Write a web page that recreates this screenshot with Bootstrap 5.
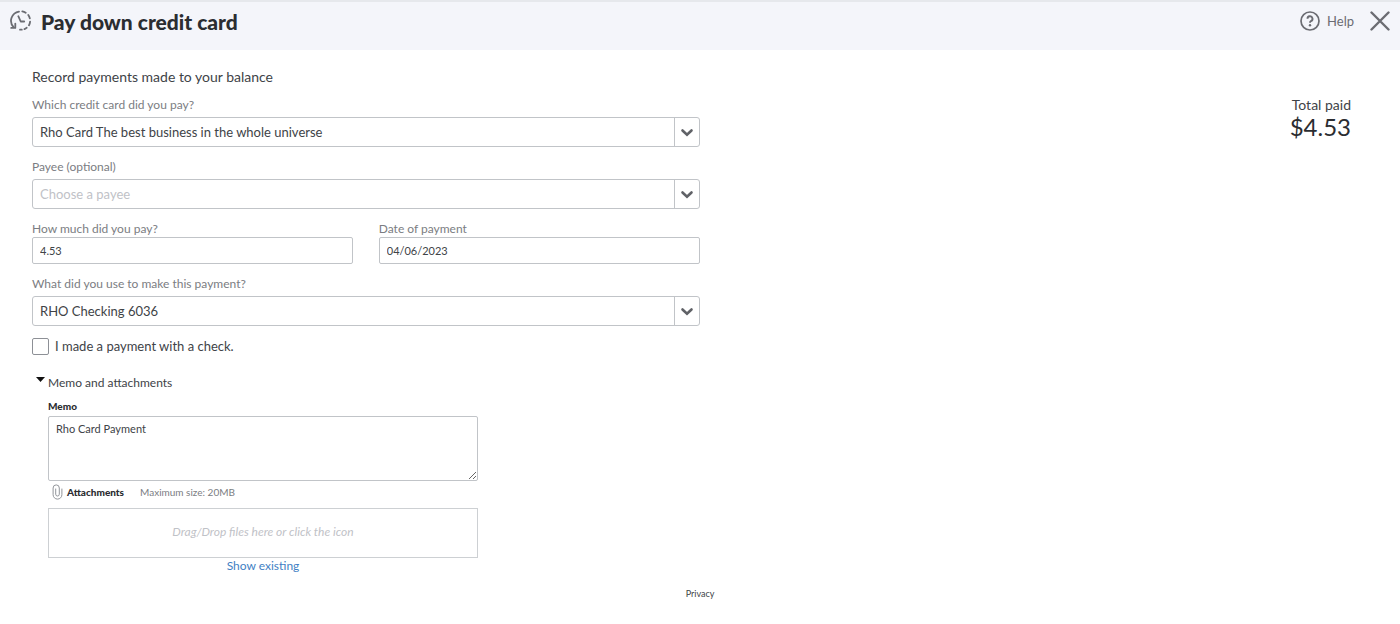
<!DOCTYPE html>
<html lang="en">
<head>
<meta charset="utf-8">
<meta name="viewport" content="width=device-width, initial-scale=1">
<title>Pay down credit card</title>
<link href="https://cdn.jsdelivr.net/npm/bootstrap@5.3.0/dist/css/bootstrap.min.css" rel="stylesheet">
<style>
  body { font-family: Lato, "Open Sans", sans-serif; font-size: 14px; line-height: 20px; color: #404347; }
  .topbar { height: 50px; background: #f4f5fa; border-top: 2px solid #e6e8ec; padding: 0 10px; color: #6b6c72; }
  .topbar h1 { font-size: 21px; line-height: 36px; padding: 2px 0 0 9px; font-weight: 900; color: #2b2d31; }
  .topbar .bar-inner { height: 38px; }
  .bar-btn { border: 0; background: none; padding: 0; color: inherit; line-height: 20px; font-size: 13px; gap: 7px; }
  .page-body { padding: 17px 49px 12px 32px; }
  .pay-form { flex: 0 0 calc(50% + 8px); max-width: calc(50% + 8px); }
  .field-group { padding-top: 12px; }
  .intro + .field-group, .check-line { padding-top: 10px; }
  .pay-row { --bs-gutter-x: 26px; }
  .field-label { display: block; font-size: 12px; line-height: 16px; color: #7b7d82; }
  .form-select.combo, .form-control.box {
    color: #404347; border: 1px solid #c1c4c8; padding: 0 7px; background-color: #fff;
  }
  .form-select.combo {
    height: 30px; border-radius: 3px; font-size: 13px; line-height: 28px; padding-right: 34px;
    background-image: url("data:image/svg+xml,%3Csvg xmlns='http://www.w3.org/2000/svg' width='25' height='28' viewBox='0 0 25 28'%3E%3Cpath d='M.5 0v28' stroke='%23c1c4c8'/%3E%3Cpath d='M8.500 12.500l4.500 4.200 4.500-4.200' fill='none' stroke='%23606267' stroke-width='2.600' stroke-linecap='round'/%3E%3C/svg%3E");
    background-size: 25px 28px; background-position: right 0 center;
  }
  .form-select.combo.empty { color: #bfc2c7; }
  .form-control.box { height: 27px; border-radius: 2px; font-size: 11px; line-height: 16px; }
  .form-control.memo-box { height: 65px; min-height: 65px; padding: 4px 7px; margin-top: 2px; }
  .form-check-input.check-pay { width: 17px; height: 17px; margin: 0; border: 1px solid #8d9096; border-radius: 2px; }
  .check-line label { padding-left: 6px; font-size: 13px; }
  .fold-btn { border: 0; background: none; padding: 0; margin-top: 19px; color: inherit; font-size: 12px; line-height: 16px; }
  .fold-btn svg { margin: 2px 3px 0 4px; }
  .memo-area { margin-left: 16px; max-width: 430px; padding-top: 7px; }
  .tiny-title { font-size: 10px; line-height: 16px; font-weight: 900; color: #2b2d31; }
  .attach-line { padding: 3px 0 8px 4px; }
  .hint { font-size: 10px; line-height: 16px; color: #7b7d82; }
  .drop-zone { display: block; width: 100%; height: 50px; border: 1px solid #cdd0d3; background: #fff; font-size: 12px; line-height: 16px; font-style: italic; color: #bfc2c7; padding: 0 0 3px; }
  .show-link { font-size: 12px; line-height: 16px; color: #3f7fc4; text-decoration: none; }
  .total-box { padding-top: 29px; }
  .total-name { line-height: 18px; }
  .total-sum { font-size: 24px; line-height: 26px; color: #2b2d31; }
  .privacy { font-size: 9px; line-height: 16px; color: #404347; text-decoration: none; }
</style>
</head>
<body>
<header class="topbar">
  <div class="bar-inner d-flex align-items-center">
    <svg width="22" height="22" viewBox="0 0 22 22" fill="none" stroke="currentColor" stroke-width="1.800" stroke-linecap="round" stroke-linejoin="round" aria-hidden="true">
      <path d="M9 1.600A9.300 9.300 0 0 0 3.600 17.200M12.300 1.400A9.300 9.300 0 0 1 15.700 2.700M18.300 5A9.300 9.300 0 0 1 19.800 8.300M20.100 11.700A9.300 9.300 0 0 1 19 15.300M16.700 17.800A9.300 9.300 0 0 1 14.500 19.100M11.800 19.700H10"/>
      <path d="M1.200 17.900H5.300V13.600M8.300 6.200L10.700 11.500H14.200"/>
    </svg>
    <h1 class="mb-0 me-auto">Pay down credit card</h1>
    <button type="button" class="bar-btn d-flex align-items-center me-3">
      <svg width="20" height="20" viewBox="0 0 20 20" fill="none" stroke="currentColor" stroke-width="1.700" aria-hidden="true">
        <circle cx="10" cy="10" r="9"/>
        <path d="M7.500 7.800A2.500 2.500 0 1 1 10.900 10.100Q10 10.500 10 11.800" stroke-width="1.900"/>
        <circle cx="10" cy="14.200" r="1.200" fill="currentColor" stroke="none"/>
      </svg>
      Help
    </button>
    <button type="button" class="bar-btn d-flex" aria-label="Close">
      <svg width="20" height="20" viewBox="0 0 20 20" fill="none" stroke="currentColor" stroke-width="2.400" stroke-linecap="round" aria-hidden="true"><path d="M1.500 1.500l17 17M18.500 1.500l-17 17"/></svg>
    </button>
  </div>
</header>

<main class="page-body d-flex justify-content-between">
  <form class="pay-form">
    <p class="intro mb-0">Record payments made to your balance</p>

    <div class="field-group">
      <label class="field-label mb-1" for="card-paid">Which credit card did you pay?</label>
      <select class="form-select combo" id="card-paid"><option>Rho Card The best business in the whole universe</option></select>
    </div>

    <div class="field-group">
      <label class="field-label mb-1" for="payee">Payee (optional)</label>
      <select class="form-select combo empty" id="payee"><option>Choose a payee</option></select>
    </div>

    <div class="row pay-row field-group">
      <div class="col-6">
        <label class="field-label" for="amount">How much did you pay?</label>
        <input class="form-control box" id="amount" type="text" value="4.53">
      </div>
      <div class="col-6">
        <label class="field-label" for="paid-on">Date of payment</label>
        <input class="form-control box" id="paid-on" type="text" value="04/06/2023">
      </div>
    </div>

    <div class="field-group">
      <label class="field-label mb-1" for="source">What did you use to make this payment?</label>
      <select class="form-select combo" id="source"><option>RHO Checking 6036</option></select>
    </div>

    <div class="check-line d-flex align-items-center">
      <input class="form-check-input check-pay" type="checkbox" id="by-check">
      <label for="by-check">I made a payment with a check.</label>
    </div>

    <button type="button" class="fold-btn d-flex" data-bs-toggle="collapse" data-bs-target="#memo-area" aria-expanded="true" aria-controls="memo-area">
      <svg width="9" height="5" viewBox="0 0 9 5" aria-hidden="true"><path d="M0 0h9L4.500 5z" fill="#111"/></svg>
      Memo and attachments
    </button>

    <div class="memo-area collapse show" id="memo-area">
      <label class="tiny-title d-block" for="memo">Memo</label>
      <textarea class="form-control box memo-box" id="memo">Rho Card Payment</textarea>
      <div class="attach-line d-flex align-items-center">
        <svg width="11" height="16" viewBox="0 0 11 16" fill="none" stroke="#92959a" stroke-width="1" stroke-linecap="round" aria-hidden="true">
          <path d="M9.900 5V10.700A4.400 4.400 0 0 1 1.100 10.700V4A3.100 3.100 0 0 1 7.300 4V10.200A1.800 1.800 0 0 1 3.700 10.200V5"/>
        </svg>
        <span class="tiny-title ms-1 me-3">Attachments</span>
        <span class="hint">Maximum size: 20MB</span>
      </div>
      <button type="button" class="drop-zone">Drag/Drop files here or click the icon</button>
      <div class="d-flex justify-content-center"><a class="show-link" href="#">Show existing</a></div>
    </div>
  </form>

  <div class="total-box text-end">
    <div class="total-name">Total paid</div>
    <div class="total-sum">$4.53</div>
  </div>
</main>

<footer class="d-flex justify-content-center"><a class="privacy" href="#">Privacy</a></footer>
<script src="https://cdn.jsdelivr.net/npm/bootstrap@5.3.0/dist/js/bootstrap.bundle.min.js"></script>
</body>
</html>
